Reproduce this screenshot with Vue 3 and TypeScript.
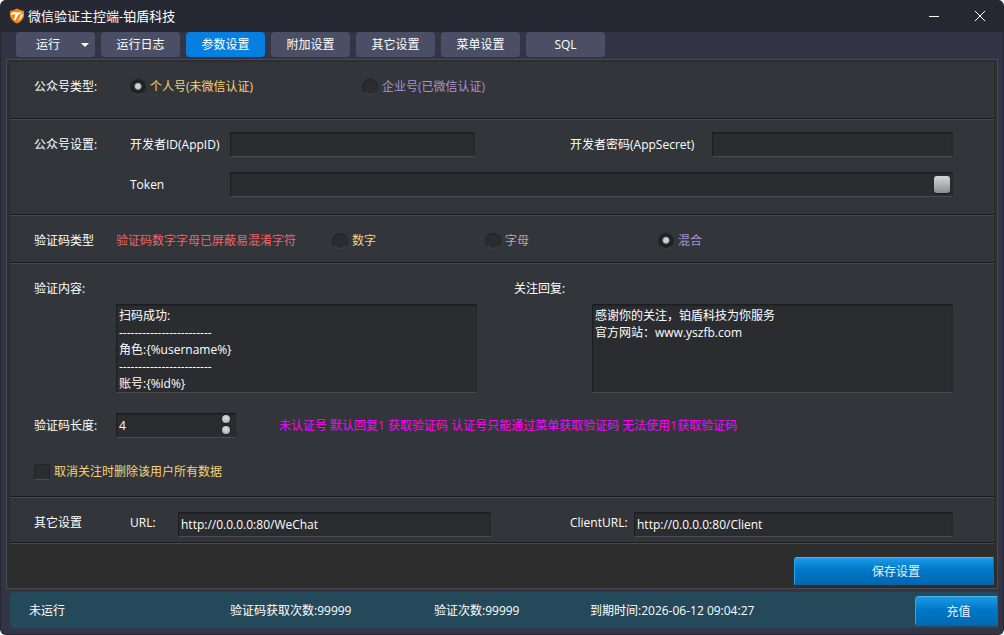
<script setup lang="ts">
import { ref } from 'vue'

const tabs: string[] = ['运行', '运行日志', '参数设置', '附加设置', '其它设置', '菜单设置', 'SQL']
const activeTab = ref('参数设置')
const accountType = ref('personal')
const codeType = ref('mixed')
const appId = ref('')
const appSecret = ref('')
const token = ref('')
const dashes = '-'.repeat(24)
const verifyText = ref(`扫码成功:\n${dashes}\n角色:{%username%}\n${dashes}\n账号:{%id%}`)
const followReply = ref('感谢你的关注，铂盾科技为你服务\n官方网站：www.yszfb.com')
const codeLength = ref(4)
const purge = ref(false)
const url = ref('http://0.0.0.0:80/WeChat')
const clientUrl = ref('http://0.0.0.0:80/Client')

function makeToken(): void {
  token.value = Math.random().toString(36).slice(2, 14)
}
</script>

<template>
  <div class="window">
    <header class="titlebar">
      <svg class="logo" viewBox="0 0 16 16" aria-hidden="true">
        <path d="M1 3Q5 2.6 8 .6Q11 2.6 15 3V8Q14 13 8 15.6Q2 13 1 8Z" fill="#f5840c" />
        <path d="M2 5.4Q5 3.4 8 4.4Q10.4 5 12.6 3.6Q11.6 6.6 9.4 6.6L6.4 12.6L4.8 11.4L6.4 6.6Q4 5.6 2 7.4Z" fill="#fff" />
        <path d="M14 5.6Q13.6 10.4 8.6 13.4Q11.6 9.4 11.8 6.8Z" fill="#fff" />
      </svg>
      <h1>微信验证主控端-铂盾科技</h1>
      <button class="win-btn" type="button" aria-label="最小化">
        <svg viewBox="0 0 12 12"><path d="M1 6.5H11" /></svg>
      </button>
      <button class="win-btn" type="button" aria-label="关闭">
        <svg viewBox="0 0 12 12"><path d="M1 1L11 11M11 1L1 11" /></svg>
      </button>
    </header>

    <nav class="tabs">
      <button
        v-for="(tab, i) in tabs"
        :key="tab"
        type="button"
        class="tab"
        :class="{ active: tab === activeTab, menu: i === 0 }"
        @click="activeTab = tab"
      >
        <span>{{ tab }}</span>
        <svg v-if="i === 0" viewBox="0 0 8 4" aria-hidden="true"><path d="M0 0H8L4 4Z" fill="#fff" /></svg>
      </button>
    </nav>

    <main class="panel">
      <section class="account" role="radiogroup" aria-labelledby="account-label">
        <span id="account-label">公众号类型:</span>
        <label class="choice gold"><input v-model="accountType" type="radio" name="account" value="personal" />个人号(未微信认证)</label>
        <label class="choice violet"><input v-model="accountType" type="radio" name="account" value="company" />企业号(已微信认证)</label>
      </section>

      <section class="developer">
        <span>公众号设置:</span>
        <label for="app-id">开发者ID(AppID)</label>
        <input id="app-id" v-model="appId" class="field" type="text" />
        <label class="second" for="app-secret">开发者密码(AppSecret)</label>
        <input id="app-secret" v-model="appSecret" class="field" type="text" />
        <label class="token-label" for="token">Token</label>
        <div class="token">
          <input id="token" v-model="token" class="field" type="text" />
          <button type="button" class="token-btn" aria-label="生成 Token" @click="makeToken"></button>
        </div>
      </section>

      <section class="code-type" role="radiogroup" aria-labelledby="code-label">
        <span id="code-label">验证码类型</span>
        <span class="warn">验证码数字字母已屏蔽易混淆字符</span>
        <label class="choice gold"><input v-model="codeType" type="radio" name="code" value="digit" />数字</label>
        <label class="choice mauve"><input v-model="codeType" type="radio" name="code" value="letter" />字母</label>
        <label class="choice violet"><input v-model="codeType" type="radio" name="code" value="mixed" />混合</label>
      </section>

      <section class="content">
        <div class="replies">
          <div class="reply">
            <label for="verify-text">验证内容:</label>
            <textarea id="verify-text" v-model="verifyText" class="field" rows="5"></textarea>
          </div>
          <div class="reply">
            <label for="follow-reply">关注回复:</label>
            <textarea id="follow-reply" v-model="followReply" class="field" rows="5"></textarea>
          </div>
        </div>
        <div class="length">
          <label for="code-length">验证码长度:</label>
          <div class="spin">
            <input id="code-length" v-model="codeLength" class="field" type="number" />
            <div class="spin-btns">
              <button type="button" aria-label="增加" @click="codeLength++"></button>
              <button type="button" aria-label="减少" @click="codeLength--"></button>
            </div>
          </div>
          <p>未认证号 默认回复1 获取验证码 认证号只能通过菜单获取验证码 无法使用1获取验证码</p>
        </div>
        <label class="choice gold"><input v-model="purge" type="checkbox" />取消关注时删除该用户所有数据</label>
      </section>

      <section class="urls">
        <span>其它设置</span>
        <label for="url">URL:</label>
        <input id="url" v-model="url" class="field" type="text" />
        <label class="second" for="client-url">ClientURL:</label>
        <input id="client-url" v-model="clientUrl" class="field" type="text" />
      </section>

      <div class="actions">
        <button type="button" class="primary save">保存设置</button>
      </div>
    </main>

    <footer class="status">
      <span>未运行</span>
      <span>验证码获取次数:99999</span>
      <span>验证次数:99999</span>
      <span>到期时间:2026-06-12 09:04:27</span>
      <button type="button" class="primary recharge">充值</button>
    </footer>
  </div>
</template>

<style>
body {
  margin: 0;
  background: #fff;
}
</style>

<style scoped>
* {
  box-sizing: border-box;
}
.window {
  display: flex;
  flex-direction: column;
  min-height: 100vh;
  padding-bottom: 6px;
  border: 1px solid #262833;
  border-top: 0;
  border-radius: 6px;
  overflow: hidden;
  background: #343447;
  color: #fff;
  font: 12px/18px "Open Sans", "Noto Sans CJK SC", sans-serif;
}
button,
input,
textarea {
  margin: 0;
  padding: 0;
  border: 0;
  font: inherit;
  color: inherit;
}
.titlebar {
  display: flex;
  align-items: center;
  height: 32px;
  padding-left: 8px;
  background: #262833;
}
.logo {
  width: 16px;
  height: 16px;
  margin-right: 3px;
}
h1 {
  flex: 1;
  margin: 0;
  font-size: 13px;
  font-weight: 400;
}
.win-btn {
  display: grid;
  place-items: center;
  width: 46px;
  height: 32px;
  background: none;
}
.win-btn svg {
  width: 12px;
  height: 12px;
  fill: none;
  stroke: #fff;
}
.tabs {
  display: flex;
  gap: 6px;
  padding: 0 15px 2px;
}
.tab {
  display: flex;
  align-items: center;
  justify-content: center;
  width: 79px;
  height: 25px;
  border-radius: 4px;
  background: #4b4f65;
}
.tab.active {
  background: #077fe0;
}
.tab.menu {
  gap: 21px;
  padding-left: 14px;
}
.tab svg {
  width: 8px;
  height: 4px;
}
.panel {
  flex: 1;
  margin: 0 5px 3px;
  padding: 2px 3px;
  border: 1px solid #4b4a4d;
  background: #2d2d2d;
}
section {
  border-bottom: 1px solid #4a494d;
  box-shadow: inset 0 -1px #1b1b1d;
  background: #323539;
  padding: 16px 41px 13px 24px;
}
.account {
  display: grid;
  grid-template-columns: 96px 232px 1fr;
  padding-bottom: 23px;
}
.developer {
  display: grid;
  grid-template-columns: 96px 100px 245fr 237px 241fr;
  row-gap: 15px;
  align-items: center;
  padding-top: 12px;
  padding-bottom: 18px;
}
.second {
  justify-self: start;
}
.developer .second {
  padding-left: 95px;
}
.token-label {
  grid-column: 2;
}
.token {
  position: relative;
  grid-column: 3 / -1;
}
.token-btn {
  position: absolute;
  top: 4px;
  right: 3px;
  width: 16px;
  height: 17px;
  border-radius: 3px;
  background: linear-gradient(#d6d7d9, #8b8d92);
  box-shadow: 0 1px 1px #17181a;
}
.field {
  display: block;
  width: 100%;
  height: 25px;
  padding: 0 2px;
  border: 1px solid #1d1e20;
  border-right-color: #26282b;
  border-bottom-color: #4b4c52;
  border-radius: 0;
  outline: 0;
  background: #2a2c30;
  box-shadow: inset 0 1px 1px #222427;
}
.code-type {
  display: grid;
  grid-template-columns: 82px 216px 153px 173px 1fr;
}
.choice {
  display: flex;
  align-items: center;
  gap: 4px;
}
.choice input {
  appearance: none;
  width: 16px;
  height: 16px;
  border: 1px solid #222427;
  border-bottom-color: #4b4c52;
  background: #2a2c30;
}
.choice input[type="radio"] {
  border-radius: 50%;
  border-bottom-color: #3f4146;
}
.choice input[type="radio"]:checked {
  background: radial-gradient(circle at 50% 45%, #cfcfd1 0 2px, #a5a6a9 3px, #1f2124 4px);
}
.choice input[type="checkbox"]:checked {
  background: #a5a6a9;
}
.gold {
  color: #f7d27c;
}
.violet {
  color: #aa93cf;
}
.mauve {
  color: #b9a3bd;
}
.warn {
  color: #f06464;
}
.content {
  padding-bottom: 16px;
}
.replies {
  display: grid;
  grid-template-columns: 443fr 439fr;
  column-gap: 37px;
}
.reply {
  display: flex;
  flex-direction: column;
  gap: 6px;
}
.reply .field {
  align-self: flex-end;
  width: calc(100% - 82px);
  height: 89px;
  line-height: 17px;
  padding: 2px;
  resize: none;
  overflow: hidden;
}
.reply + .reply .field {
  width: calc(100% - 78px);
}
.length {
  display: grid;
  grid-template-columns: 82px 120px 1fr;
  align-items: center;
  margin: 20px 0 25px;
}
.length p {
  margin: 0 0 0 43px;
  color: #f0f;
}
.spin {
  position: relative;
}
.spin .field {
  appearance: textfield;
}
.spin .field::-webkit-inner-spin-button {
  display: none;
}
.spin-btns {
  position: absolute;
  top: 2px;
  right: 6px;
  display: flex;
  flex-direction: column;
  gap: 3px;
}
.spin-btns button {
  width: 8px;
  height: 8px;
  border-radius: 50%;
  background: radial-gradient(circle at 50% 35%, #dcdcde, #a5a6a9);
  box-shadow: 0 0 1px 1px #1f2124;
}
.urls {
  display: grid;
  grid-template-columns: 96px 48px 313fr 143px 319fr;
  align-items: start;
  padding-top: 14px;
  padding-bottom: 6px;
}
.urls span,
.urls label {
  padding-top: 2px;
}
.urls .second {
  padding-left: 79px;
}
.actions {
  display: flex;
  justify-content: flex-end;
  padding: 13px 0 1px;
}
.primary {
  padding: 2px 0 0 4px;
  border: 1px solid #1593e6;
  border-color: #4bb6f2 #0a6fba #0b62a6 #2ba5ef;
  background: linear-gradient(#1c9ae8, #0078c8 45%, #0068b2);
  color: #e8f1f8;
}
.save {
  width: 200px;
  height: 28px;
  border-radius: 3px 0 0;
}
.status {
  display: grid;
  grid-template-columns: 201px 204px 156px 1fr 83px;
  align-items: center;
  margin: 0 5px 0 9px;
  padding: 4px 0 2px 19px;
  border-radius: 4px 0 0 4px;
  background: #24495a;
}
.recharge {
  height: 30px;
  border-radius: 4px 0 0 4px;
}
</style>
